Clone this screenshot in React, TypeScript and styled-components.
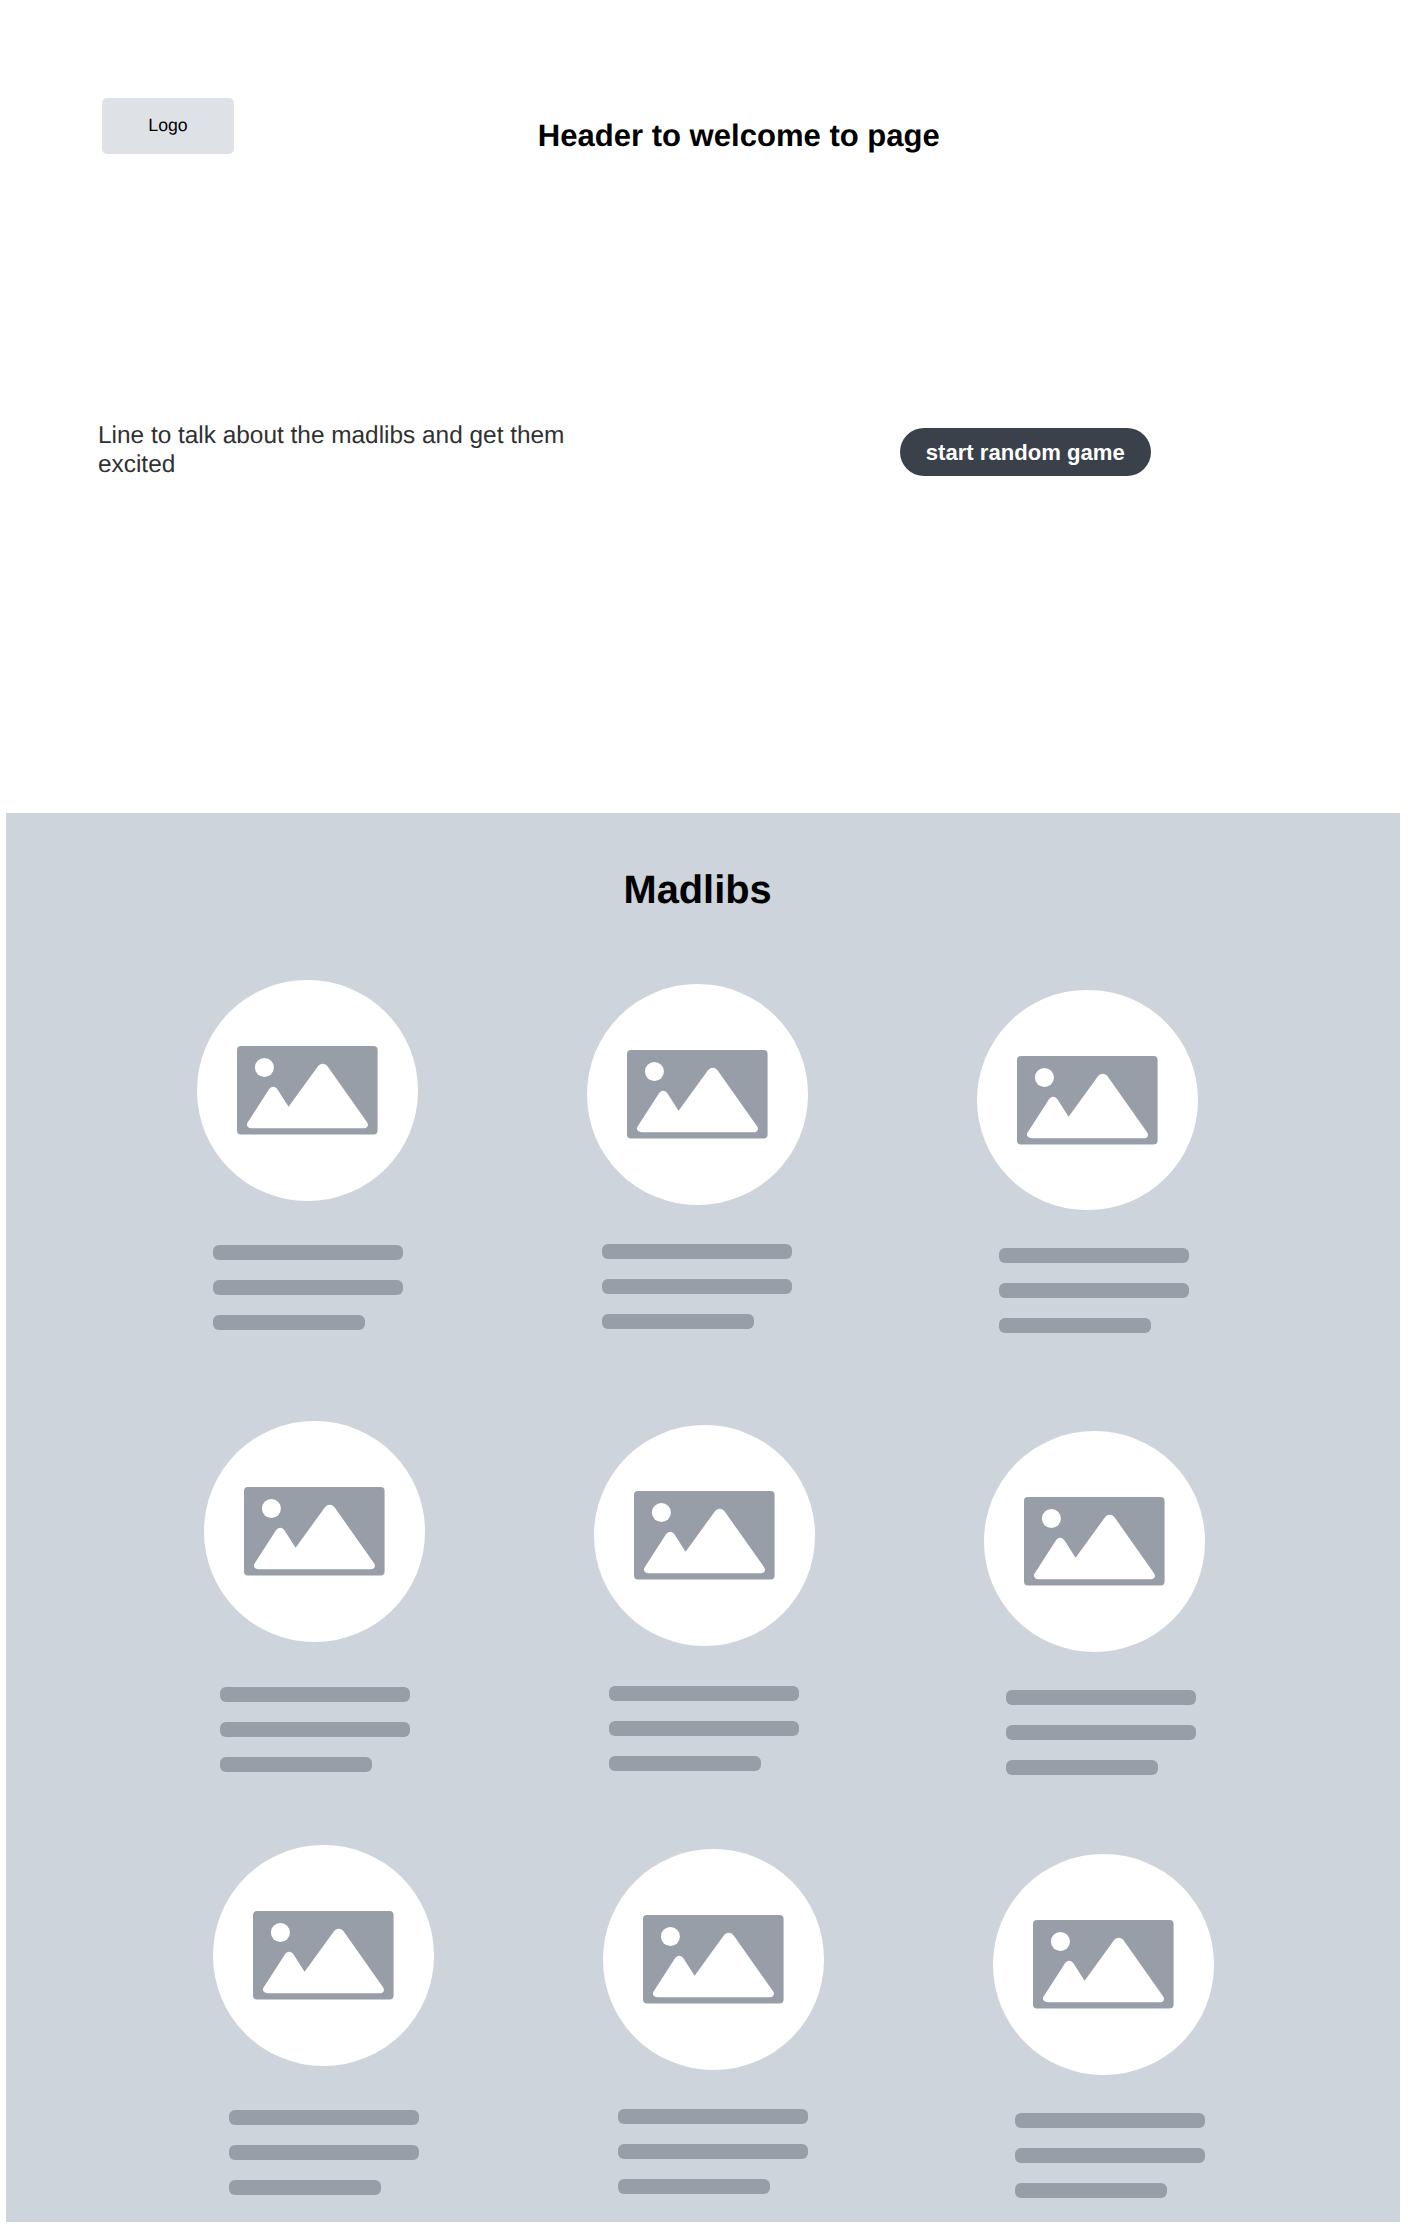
import React from "react";
import styled, { createGlobalStyle } from "styled-components";

const GlobalStyle = createGlobalStyle`
  *, *::before, *::after { box-sizing: border-box; }
  body { margin: 0; background: #fff; font-family: "Liberation Sans", Arial, sans-serif; }
  h1, h2, p { margin: 0; }
`;

const Page = styled.div`
  width: 1408px;
  height: 2228px;
  padding: 0 8px 6px 6px;
  display: flex;
  flex-direction: column;
  text-rendering: geometricPrecision;
`;

const Header = styled.header`
  height: 406px;
  padding: 98px 0 0 96px;
  display: flex;
  align-items: flex-start;
`;

const Logo = styled.div`
  width: 132px;
  height: 56px;
  padding-bottom: 1px;
  border-radius: 5px;
  background: #dee2e7;
  color: #000;
  font-size: 17.7px;
  display: flex;
  align-items: center;
  justify-content: center;
`;

const Welcome = styled.h1`
  margin: 20px 0 0 303.8px;
  font-size: 31.05px;
  line-height: 36px;
  white-space: nowrap;
`;

const Intro = styled.section`
  height: 407px;
  padding-left: 92px;
  display: flex;
  align-items: flex-start;
`;

const Tagline = styled.p`
  width: 500px;
  margin-top: 15px;
  color: #303132;
  font-size: 24.4px;
  line-height: 29.2px;
`;

const StartButton = styled.button`
  width: 250.5px;
  height: 48px;
  margin: 22.3px 0 0 302px;
  padding: 1px 0 0;
  border: 0;
  border-radius: 24px;
  background: #3b414b;
  color: #fff;
  font-family: inherit;
  font-size: 22.1px;
  font-weight: 700;
  white-space: nowrap;
`;

const Gallery = styled.main`
  height: 1409px;
  background: #cdd4dc;
  overflow: hidden;
`;

const GalleryTitle = styled.h2`
  padding: 53.5px 0 0 617.5px;
  height: 167px;
  font-size: 39.8px;
  line-height: 46px;
`;

const Row = styled.div<{ $indent: number; $height: number }>`
  height: ${(p) => p.$height}px;
  padding-left: ${(p) => p.$indent}px;
  display: grid;
  grid-template-columns: repeat(3, 390px);
`;

const Card = styled.article<{ $drop: number }>`
  padding-top: ${(p) => p.$drop}px;
`;

const Thumb = styled.div`
  width: 220.7px;
  height: 220.7px;
  border-radius: 50%;
  background: #fff;
`;

const Lines = styled.div<{ $gap: number; $indent: number }>`
  padding: ${(p) => p.$gap}px 0 0 ${(p) => p.$indent}px;
  display: flex;
  flex-direction: column;
  gap: 20px;
`;

const Line = styled.div<{ $width: number }>`
  width: ${(p) => p.$width}px;
  height: 15px;
  border-radius: 6px;
  background: #979ea8;
`;

const Picture = () => (
  <svg width="220.7" height="220.7" viewBox="0 0 220.7 220.7" display="block" aria-hidden="true">
    <rect x="40" y="66.1" width="140.6" height="88.5" rx="4" fill="#979ea8" />
    <circle cx="67.4" cy="87.5" r="9.5" fill="#fff" />
    <path
      fill="#fff"
      d="M50.6 142.6 L72 109.3 C74.2 105.8 78.2 105.8 80.4 109.3 L91.6 126.7 L120.6 86.8 C123.3 82.8 128.2 82.8 130.9 86.8 L170.2 142.4 C172 145.2 170.4 148.2 167 148.2 H55 C50.6 148.2 48.8 145.4 50.6 142.6 Z"
    />
  </svg>
);

const columns = [
  { drop: 0, gap: 44.6, indent: 16 },
  { drop: 4, gap: 39.6, indent: 15 },
  { drop: 9.5, gap: 38.3, indent: 22 },
];

const rows = [
  { indent: 191, height: 441.4 },
  { indent: 198, height: 423.6 },
  { indent: 207, height: 377 },
];

export default function App() {
  return (
    <>
      <GlobalStyle />
      <Page>
        <Header>
          <Logo>Logo</Logo>
          <Welcome>Header to welcome to page</Welcome>
        </Header>
        <Intro>
          <Tagline>Line to talk about the madlibs and get them excited</Tagline>
          <StartButton>start random game</StartButton>
        </Intro>
        <Gallery>
          <GalleryTitle>Madlibs</GalleryTitle>
          {rows.map((row, r) => (
            <Row key={r} $indent={row.indent} $height={row.height}>
              {columns.map((col, c) => (
                <Card key={c} $drop={col.drop}>
                  <Thumb>
                    <Picture />
                  </Thumb>
                  <Lines $gap={col.gap} $indent={col.indent}>
                    <Line $width={190} />
                    <Line $width={190} />
                    <Line $width={152} />
                  </Lines>
                </Card>
              ))}
            </Row>
          ))}
        </Gallery>
      </Page>
    </>
  );
}
